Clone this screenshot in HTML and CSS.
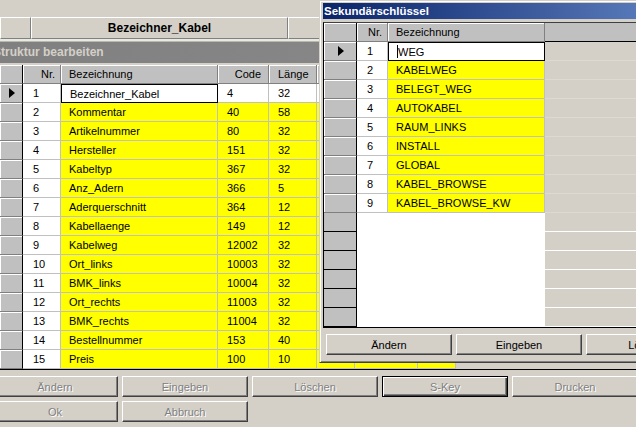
FILE: index.html
```html
<!DOCTYPE html>
<html lang="de">
<head>
  <meta charset="UTF-8">
  <title>Struktur bearbeiten</title>
  <link rel="stylesheet" href="styles.css">
</head>
<body>
  <div class="main">
    <div class="keyrow">
      <div class="kcell"></div>
      <div class="kcell">Bezeichner_Kabel</div>
      <div class="kcell"></div>
    </div>
    <div class="frameline"></div>
    <div class="titlebar">Struktur bearbeiten</div>
    <div class="gap"></div>

    <div class="grid">
      <div class="row head">
        <div class="ind"></div>
        <div class="c r">Nr.</div>
        <div class="c">Bezeichnung</div>
        <div class="c r">Code</div>
        <div class="c">Länge</div>
        <div class="c"></div><div class="c"></div><div class="c"></div><div class="fill"></div>
      </div>
      <div class="row">
        <div class="ind"><span class="arrow"></span></div>
        <div class="c nr">1</div>
        <div class="c edit">Bezeichner_Kabel</div>
        <div class="c">4</div>
        <div class="c">32</div>
        <div class="c"></div><div class="c"></div><div class="c"></div><div class="fill"></div>
      </div>
      <div class="row y"><div class="ind"></div><div class="c nr">2</div><div class="c">Kommentar</div><div class="c">40</div><div class="c">58</div><div class="c"></div><div class="c"></div><div class="c"></div><div class="fill"></div></div>
      <div class="row y"><div class="ind"></div><div class="c nr">3</div><div class="c">Artikelnummer</div><div class="c">80</div><div class="c">32</div><div class="c"></div><div class="c"></div><div class="c"></div><div class="fill"></div></div>
      <div class="row y"><div class="ind"></div><div class="c nr">4</div><div class="c">Hersteller</div><div class="c">151</div><div class="c">32</div><div class="c"></div><div class="c"></div><div class="c"></div><div class="fill"></div></div>
      <div class="row y"><div class="ind"></div><div class="c nr">5</div><div class="c">Kabeltyp</div><div class="c">367</div><div class="c">32</div><div class="c"></div><div class="c"></div><div class="c"></div><div class="fill"></div></div>
      <div class="row y"><div class="ind"></div><div class="c nr">6</div><div class="c">Anz_Adern</div><div class="c">366</div><div class="c">5</div><div class="c"></div><div class="c"></div><div class="c"></div><div class="fill"></div></div>
      <div class="row y"><div class="ind"></div><div class="c nr">7</div><div class="c">Aderquerschnitt</div><div class="c">364</div><div class="c">12</div><div class="c"></div><div class="c"></div><div class="c"></div><div class="fill"></div></div>
      <div class="row y"><div class="ind"></div><div class="c nr">8</div><div class="c">Kabellaenge</div><div class="c">149</div><div class="c">12</div><div class="c"></div><div class="c"></div><div class="c"></div><div class="fill"></div></div>
      <div class="row y"><div class="ind"></div><div class="c nr">9</div><div class="c">Kabelweg</div><div class="c">12002</div><div class="c">32</div><div class="c"></div><div class="c"></div><div class="c"></div><div class="fill"></div></div>
      <div class="row y"><div class="ind"></div><div class="c nr">10</div><div class="c">Ort_links</div><div class="c">10003</div><div class="c">32</div><div class="c"></div><div class="c"></div><div class="c"></div><div class="fill"></div></div>
      <div class="row y"><div class="ind"></div><div class="c nr">11</div><div class="c">BMK_links</div><div class="c">10004</div><div class="c">32</div><div class="c"></div><div class="c"></div><div class="c"></div><div class="fill"></div></div>
      <div class="row y"><div class="ind"></div><div class="c nr">12</div><div class="c">Ort_rechts</div><div class="c">11003</div><div class="c">32</div><div class="c"></div><div class="c"></div><div class="c"></div><div class="fill"></div></div>
      <div class="row y"><div class="ind"></div><div class="c nr">13</div><div class="c">BMK_rechts</div><div class="c">11004</div><div class="c">32</div><div class="c"></div><div class="c"></div><div class="c"></div><div class="fill"></div></div>
      <div class="row y"><div class="ind"></div><div class="c nr">14</div><div class="c">Bestellnummer</div><div class="c">153</div><div class="c">40</div><div class="c"></div><div class="c"></div><div class="c"></div><div class="fill"></div></div>
      <div class="row y"><div class="ind"></div><div class="c nr">15</div><div class="c">Preis</div><div class="c">100</div><div class="c">10</div><div class="c"></div><div class="c"></div><div class="c"></div><div class="fill"></div></div>
    </div>

    <div class="btns">
      <button class="btn off">Ändern</button>
      <button class="btn off">Eingeben</button>
      <button class="btn off">Löschen</button>
      <button class="btn off default">S-Key</button>
      <button class="btn off">Drucken</button>
    </div>
    <div class="btns second">
      <button class="btn off">Ok</button>
      <button class="btn off">Abbruch</button>
    </div>
  </div>

  <!-- Sekundärschlüssel dialog, lies over the main window -->
  <div class="dialog">
    <div class="dtitle">Sekundärschlüssel</div>
    <div class="dgrid">
      <div class="drow head">
        <div class="ind"></div>
        <div class="c r">Nr.</div>
        <div class="c">Bezeichnung</div>
        <div class="fill"></div>
      </div>
      <div class="drow">
        <div class="ind"><span class="arrow"></span></div>
        <div class="c nr">1</div>
        <div class="c edit"><span class="caret"></span>WEG</div>
        <div class="fill"></div>
      </div>
      <div class="drow y"><div class="ind"></div><div class="c nr">2</div><div class="c">KABELWEG</div><div class="fill"></div></div>
      <div class="drow y"><div class="ind"></div><div class="c nr">3</div><div class="c">BELEGT_WEG</div><div class="fill"></div></div>
      <div class="drow y"><div class="ind"></div><div class="c nr">4</div><div class="c">AUTOKABEL</div><div class="fill"></div></div>
      <div class="drow y"><div class="ind"></div><div class="c nr">5</div><div class="c">RAUM_LINKS</div><div class="fill"></div></div>
      <div class="drow y"><div class="ind"></div><div class="c nr">6</div><div class="c">INSTALL</div><div class="fill"></div></div>
      <div class="drow y"><div class="ind"></div><div class="c nr">7</div><div class="c">GLOBAL</div><div class="fill"></div></div>
      <div class="drow y"><div class="ind"></div><div class="c nr">8</div><div class="c">KABEL_BROWSE</div><div class="fill"></div></div>
      <div class="drow y"><div class="ind"></div><div class="c nr">9</div><div class="c">KABEL_BROWSE_KW</div><div class="fill"></div></div>
      <div class="drow empty"><div class="ind"></div><div class="blank"></div><div class="fill"></div></div>
      <div class="drow empty"><div class="ind"></div><div class="blank"></div><div class="fill"></div></div>
      <div class="drow empty"><div class="ind"></div><div class="blank"></div><div class="fill"></div></div>
      <div class="drow empty"><div class="ind"></div><div class="blank"></div><div class="fill"></div></div>
      <div class="drow empty"><div class="ind"></div><div class="blank"></div><div class="fill"></div></div>
      <div class="drow empty"><div class="ind"></div><div class="blank"></div><div class="fill"></div></div>
    </div>
    <div class="dbtns">
      <button class="btn">Ändern</button>
      <button class="btn">Eingeben</button>
      <button class="btn">Löschen</button>
    </div>
  </div>
</body>
</html>
```

FILE: styles.css
```css
* { box-sizing: border-box; }
body { margin: 0; width: 636px; height: 427px; overflow: hidden; position: relative; background: #d4d0c8; font-family: "Liberation Sans", Arial, sans-serif; font-size: 11px; color: #000; }

.main { padding-top: 17px; }
.keyrow { display: grid; grid-template-columns: 31px 257px 1fr; height: 22px; }
.kcell { border: 1px solid; border-color: #fff #808080 #808080 #fff; text-align: center; font-weight: bold; font-size: 12px; line-height: 20px; }
.frameline { height: 3px; background: #e6eadf; border-bottom: 1px solid #b8b8b0; }
.titlebar { height: 21px; background: linear-gradient(to right, #808080, #8c8c8c); color: #d4d0c8; font-weight: bold; font-size: 12px; line-height: 21px; text-indent: -7px; white-space: nowrap; overflow: hidden; }
.gap { height: 2px; }

/* main grid */
.grid { border-bottom: 1px solid #000; }
.row { display: grid; grid-template-columns: 23px 38px 157px 51px 48px 38px 63px 38px 1fr; height: 19px; }
.c { border-right: 1px solid #c0c0c0; border-bottom: 1px solid #c0c0c0; padding-left: 9px; line-height: 18px; white-space: nowrap; overflow: hidden; background: #fff; }
.row .c:nth-child(3) { padding-left: 8px; }
.nr { padding-left: 10px; }
.r { text-align: right; padding-right: 5px; }
.fill { background: #d4d0c8; }
.ind { background: #c0c0c0; border-right: 1px solid #000; border-bottom: 1px solid #808080; box-shadow: inset 1px 1px #fff; display: flex; align-items: center; justify-content: center; }
.arrow { width: 0; height: 0; border-left: 6px solid #000; border-top: 5px solid transparent; border-bottom: 5px solid transparent; margin-left: 1px; }
.y .c { background: #ff0; }
.y .c.nr { background: #fff; }
.head .c { background: #c0c0c0; border-right-color: #808080; border-bottom-color: #808080; box-shadow: inset 1px 1px #fff; }
.head .fill { background: #c0c0c0; }
.row.head .c:nth-child(4) { padding-right: 7px; }
.edit { border: 1px solid #000; background: #fff; }
.row .edit { padding-left: 7px; }

/* buttons */
.btns { display: flex; gap: 4px; margin: 6px 0 0 -8px; }
.btns.second { margin-top: 4px; }
.btn { flex: none; width: 126px; height: 21px; padding: 0; background: #d4d0c8; border: 1px solid; border-color: #fff #404040 #404040 #fff; box-shadow: inset -1px -1px #808080; font-family: inherit; font-size: 11px; color: #000; }
.btn.off { color: #808080; text-shadow: 1px 1px #fff; }
.btn.default { border-color: #000; box-shadow: inset 1px 1px #fff, inset -1px -1px #404040, inset -2px -2px #808080; }

/* dialog */
.dialog { position: absolute; left: 319px; top: 0; width: 340px; background: #d4d0c8; border: 1px solid; border-color: #d4d0c8 #404040 #404040 #d4d0c8; box-shadow: inset 1px 1px #fff, inset -1px -1px #808080; padding: 2px 3px 7px 3px; }
.dtitle { height: 16px; background: linear-gradient(to right, #0a246a, #5a7cbc); color: #fff; font-weight: bold; font-size: 11.5px; line-height: 16px; padding-left: 1px; white-space: nowrap; }
.dgrid { margin-top: 3px; border-top: 1px solid #404040; border-left: 1px solid #000; border-bottom: 1px solid #000; }
.drow { display: grid; grid-template-columns: 33px 31px 157px 1fr; height: 19px; }
.drow .c:nth-child(3) { padding-left: 8px; }
.drow.head .fill { border-bottom: 1px solid #000; }
.drow .fill { border-bottom: 1px solid #dedad3; }
.drow .edit { padding-left: 2px; }
.caret { display: inline-block; width: 1px; height: 13px; background: #000; vertical-align: -2px; }
.drow.empty .ind { border-bottom-color: #000; box-shadow: none; }
.blank { grid-column: span 2; background: #fff; }
.drow.empty .fill { border-bottom-color: #fff; }
.dbtns { display: flex; gap: 4px; margin: 6px 0 0 3px; }
```
